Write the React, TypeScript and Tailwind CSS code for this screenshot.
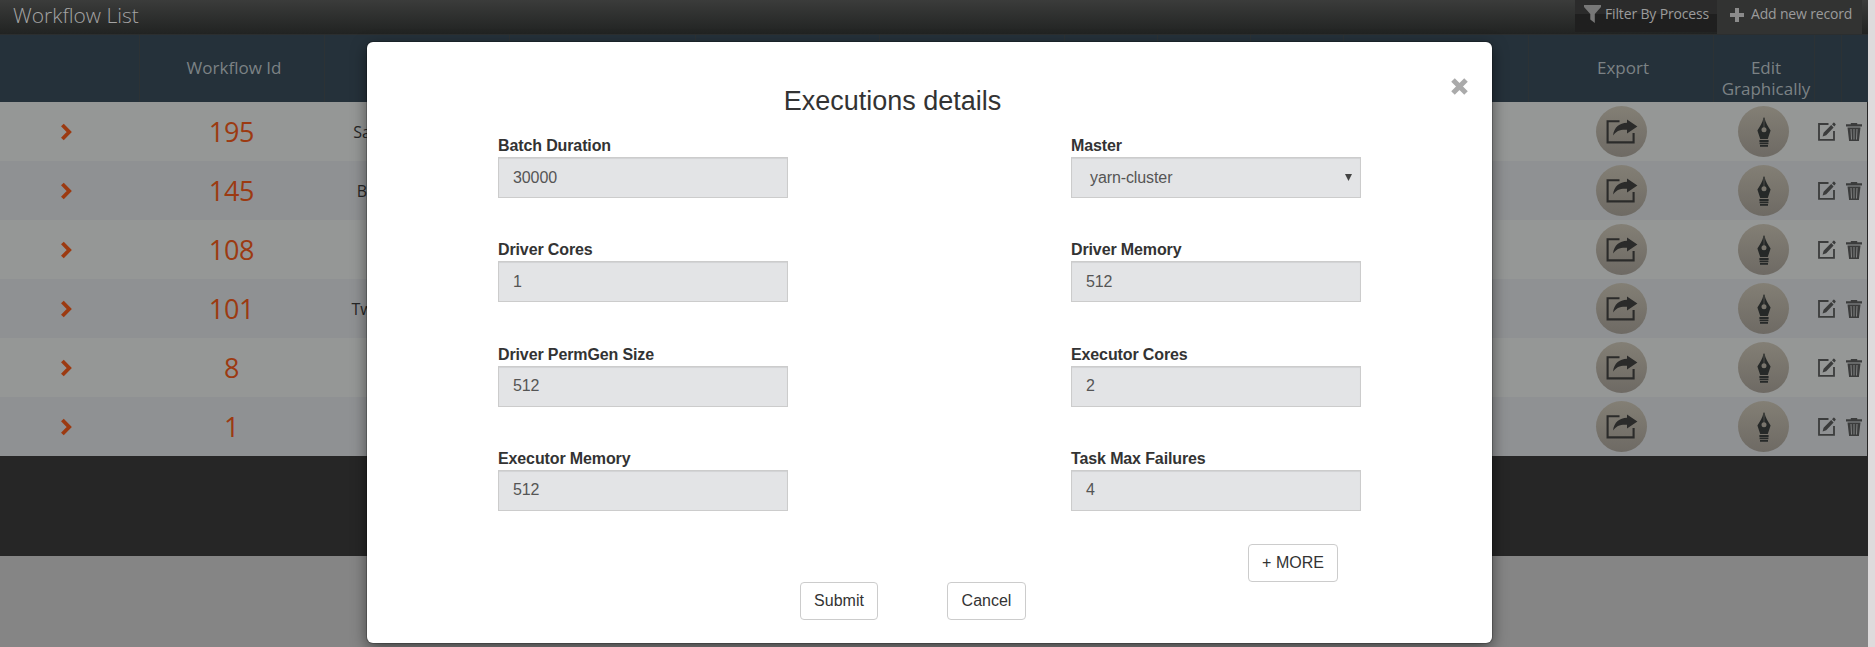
import React from "react";

const rows = [
  { id: 195, name: "Sa" },
  { id: 145, name: "B" },
  { id: 108, name: "" },
  { id: 101, name: "Tw" },
  { id: 8, name: "" },
  { id: 1, name: "" },
];

const fields: [string, string][] = [
  ["Batch Duration", "30000"],
  ["Master", "yarn-cluster"],
  ["Driver Cores", "1"],
  ["Driver Memory", "512"],
  ["Driver PermGen Size", "512"],
  ["Executor Cores", "2"],
  ["Executor Memory", "512"],
  ["Task Max Failures", "4"],
];

const COLS =
  "grid grid-cols-[140px_185px_185px_186px_184px_185px_93px_93px_93px_185px_185px_101px_27px_26px]";

function Chevron() {
  return (
    <svg width="12" height="18" viewBox="0 0 12 18">
      <path d="M2.4 2 L9.2 9 L2.4 16" fill="none" stroke="#9c3a11" strokeWidth="3.8" />
    </svg>
  );
}

function ShareIcon() {
  return (
    <svg width="32" height="26" viewBox="0 0 32 26">
      <path d="M13.5 2.3 H1.6 V23.4 H27.6 V14" fill="none" stroke="#2b2b2a" strokeWidth="2.1" />
      <path d="M21 0.4 L31.4 7.5 L21 14.6 V10.8 C14 10.4 10.3 12 7 16.6 C8.2 8.2 13.5 4 21 3.8 Z" fill="#2b2b2a" />
    </svg>
  );
}

function PenIcon() {
  return (
    <svg width="14" height="30" viewBox="0 0 14 30">
      <path
        fillRule="evenodd"
        d="M6.6 0.5 H7.4 C8.5 6 11 9.5 13.6 13.5 L10.8 22 H3.2 L0.4 13.5 C3 9.5 5.5 6 6.6 0.5 Z M7 10.3 A2.5 2.5 0 1 0 7 15.3 A2.5 2.5 0 1 0 7 10.3 Z"
        fill="#262928"
      />
      <path d="M7 2 V11" stroke="#77736b" strokeWidth="0.5" />
      <path d="M2.4 24 H11.6 M2.6 26.4 H11.4 M3 28.8 H11" stroke="#262928" strokeWidth="1.8" />
    </svg>
  );
}

function EditIcon() {
  return (
    <svg width="18" height="19" viewBox="0 0 18 19">
      <path d="M10.5 2 H1 V17.8 H16 V9" fill="none" stroke="#3b3c3c" strokeWidth="1.8" />
      <path d="M4.6 14.6 L5.6 10.8 L13.2 3 L15.6 5.4 L8.2 13.2 Z M14 2.2 L15.4 0.8 Q16 0.4 16.6 0.9 L17.5 1.9 Q18 2.5 17.5 3.1 L16.3 4.5 Z" fill="#3b3c3c" />
    </svg>
  );
}

function TrashIcon() {
  return (
    <svg width="16" height="18" viewBox="0 0 16 18">
      <path d="M0 1.3 H4.8 V0 H11.2 V1.3 H16 V3.6 H0 Z M1.5 4.6 H14.5 L12.9 18 H3.1 Z" fill="#3b3c3c" />
      <path d="M5 6 L5.5 16.5 M8 6 V16.5 M11 6 L10.5 16.5" stroke="#8b8c8c" strokeWidth="0.9" />
    </svg>
  );
}

function Disc({ children }: { children: React.ReactNode }) {
  return (
    <div className="flex h-[51px] w-[51px] items-center justify-center rounded-full bg-linear-to-b from-[#837f75] to-[#6e6a64]">
      {children}
    </div>
  );
}

function Header({ children, className = "" }: { children?: React.ReactNode; className?: string }) {
  return (
    <div className={`border-r border-[#2c3235] pt-[22px] text-center text-[17px] leading-[21px] ${className}`}>
      {children}
    </div>
  );
}

function Workflows() {
  return (
    <div className="h-[647px] w-[1868px] bg-[#858585] font-['Open_Sans',sans-serif]">
      <div className="flex h-[35px] items-start border-b border-[#2b2e2f] bg-linear-to-b from-[#3b3c3b] to-[#212322]">
        <h1 className="grow pl-[13px] text-[21px] leading-[30px] font-light text-[#a4a4a4]">Workflow List</h1>
        <div className="flex h-[32px] w-[142px] items-start bg-linear-to-b from-[#2b2b2b] from-[43%] to-[#1f1f1f] to-[44%] pl-[9px] text-[14px] leading-[28px] text-[#9b9b9b]">
          <svg className="mt-[5px] mr-[4px]" width="17" height="18" viewBox="0 0 17 18">
            <path d="M0 0 H17 V2 L10.8 9 V18 L6.3 14.5 V9 L0 2 Z" fill="#777" />
          </svg>
          <span className="tracking-[-0.15px] whitespace-nowrap">Filter By Process</span>
        </div>
        <div className="mr-[6px] flex h-[34px] w-[145px] items-start bg-[#323332] pl-[13px] text-[14px] leading-[28px] text-[#9b9b9b]">
          <svg className="mt-[8px] mr-[7px]" width="14" height="14" viewBox="0 0 14 14">
            <path d="M5 0 H9 V5 H14 V9 H9 V14 H5 V9 H0 V5 H5 Z" fill="#8b8b8b" />
          </svg>
          <span className="tracking-[-0.17px] whitespace-nowrap">Add new record</span>
        </div>
      </div>
      <div className={`${COLS} h-[67px] bg-[#25313a] text-[#7c8285]`}>
        <Header />
        <Header className="pl-[4px]">Workflow Id</Header>
        <Header />
        <Header />
        <Header />
        <Header />
        <Header />
        <Header />
        <Header />
        <Header />
        <Header className="pl-[4px]">Export</Header>
        <Header className="pl-[4px]">Edit Graphically</Header>
        <Header />
        <div />
      </div>
      {rows.map((r, i) => (
        <div
          key={r.id}
          className={`flex h-[59px] items-center border-r border-[#262626] ${i % 2 ? "bg-[#8f9193]" : "bg-[#959796]"}`}
        >
          <div className="w-[140px] pl-[60px]">
            <Chevron />
          </div>
          <div className="w-[184px] pr-[1px] text-center text-[27px] leading-[40px] tracking-[-0.3px] text-[#9c3a11]">
            {r.id}
          </div>
          <div className="w-[86px] pr-[10px] text-center text-[16px] text-[#262626]">
            <span>{r.name}</span>
          </div>
          <div className="grow" />
          <div className="w-[142px]">
            <Disc>
              <ShareIcon />
            </Disc>
          </div>
          <div className="w-[80px]">
            <Disc>
              <PenIcon />
            </Disc>
          </div>
          <div className="flex w-[49px] items-center gap-[10px]">
            <EditIcon />
            <TrashIcon />
          </div>
        </div>
      ))}
      <div className="h-[100px] bg-[#262626]" />
    </div>
  );
}

function Field({ label, value }: { label: string; value: string }) {
  return (
    <label className="block h-[104.33px] w-[290px]">
      <span className="block h-[22px] pt-[1px] text-[16px] leading-[20px] font-bold tracking-[-0.12px] text-[#333]">
        {label}
      </span>
      <span
        className={`flex h-[41px] items-center border border-[#ccc] bg-[#e3e4e6] pr-[8px] text-[16px] tracking-[-0.1px] text-[#555] shadow-[inset_0_1px_1px_rgba(0,0,0,0.075)] ${label === "Master" ? "pl-[18px]" : "pl-[14px]"}`}
      >
        <span className="grow">{value}</span>
        {label === "Master" && (
          <svg width="7" height="7" viewBox="0 0 7 7">
            <path d="M0 0 H7 L3.5 7 Z" fill="#444" />
          </svg>
        )}
      </span>
    </label>
  );
}

function Button({ children, className }: { children: React.ReactNode; className: string }) {
  return (
    <button className={`h-[38px] rounded-[4px] border border-[#ccc] bg-white text-[16px] text-[#333] ${className}`}>
      {children}
    </button>
  );
}

function Dialog() {
  return (
    <div className="absolute top-[42px] left-[367px] h-[601px] w-[1125px] rounded-[6px] bg-white font-['Liberation_Sans',sans-serif] shadow-[0_5px_15px_rgba(0,0,0,0.5),0_0_0_1px_rgba(0,0,0,0.2)]">
      <div className="flex h-[93px] pr-[24px]">
        <h2 className="w-[1051px] pt-[44px] text-center text-[27px] leading-[30px] text-[#333]">Executions details</h2>
        <button className="mt-[36px] ml-auto h-[17px]" aria-label="Close">
          <svg width="17" height="17" viewBox="0 0 17 17">
            <path d="M2 2 L15 15 M15 2 L2 15" stroke="#aaa" strokeWidth="5" />
          </svg>
        </button>
      </div>
      <div className="grid grid-cols-[573px_290px] pl-[131px]">
        {fields.map(([label, value]) => (
          <Field key={label} label={label} value={value} />
        ))}
      </div>
      <div className="-mt-[8px] flex justify-end pr-[154px]">
        <Button className="w-[90px]">+ MORE</Button>
      </div>
      <div className="flex gap-[69px] pl-[433px]">
        <Button className="w-[78px]">Submit</Button>
        <Button className="w-[79px]">Cancel</Button>
      </div>
    </div>
  );
}

export default function App() {
  return (
    <div className="relative h-[647px] w-[1875px] overflow-hidden bg-[#dedbdc]">
      <div className="h-[647px] w-[1868px] overflow-hidden">
        <Workflows />
      </div>
      <Dialog />
    </div>
  );
}
